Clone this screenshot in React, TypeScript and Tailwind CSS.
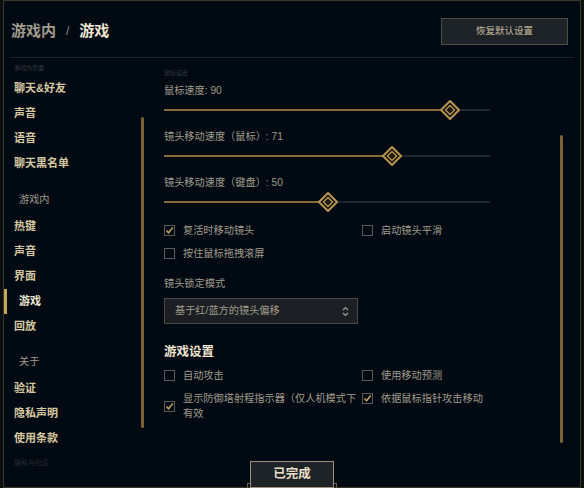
const navTop = ["聊天&好友", "声音", "语音", "聊天黑名单"];
const navGame = ["热键", "声音", "界面", "游戏", "回放"];
const navAbout = ["验证", "隐私声明", "使用条款"];

const sliders = [
  { label: "鼠标速度: 90", value: 90, mt: "mt-[6px]" },
  { label: "镜头移动速度（鼠标）: 71", value: 71, mt: "mt-[11px]" },
  { label: "镜头移动速度（键盘）: 50", value: 50, mt: "mt-[11px]" },
];

const NavItem = ({ text, active }: { text: string; active?: boolean }) =>
  active ? (
    <div className="h-[25px] flex items-center border-l-[3px] border-[#c8a55a] pl-[12px] text-[11px] font-bold text-[#f0e6d2]">
      {text}
    </div>
  ) : (
    <div className="h-[25px] flex items-center pl-[10px] text-[11px] font-bold text-[#d6c8a0]">
      {text}
    </div>
  );

const SectionLabel = ({ text, mt }: { text: string; mt: string }) => (
  <div className={`h-[28px] flex items-center pl-[15px] text-[10.2px] text-[#a09b8c] ${mt}`}>
    {text}
  </div>
);

const Thumb = () => (
  <svg width="20" height="20" viewBox="0 0 20 20">
    <polygon points="10,1 19,10 10,19 1,10" fill="#0a0e12" stroke="#b8954f" strokeWidth="2" />
    <polygon points="10,5.5 14.5,10 10,14.5 5.5,10" fill="none" stroke="#b8954f" strokeWidth="1.5" />
    <polygon points="10,8.5 11.5,10 10,11.5 8.5,10" fill="#3a2f1a" />
  </svg>
);

const Slider = ({ value }: { value: number }) => (
  <div className="relative h-[18px] mt-[3px] flex items-center">
    <div className="h-[2px] w-full bg-[#1e262e] flex">
      <div className="h-full bg-[#8a6c3c]" style={{ width: `calc(13px + ${value * 3.04}px)` }} />
    </div>
    <div className="absolute top-[-1px]" style={{ left: `${2 + value * 3.04}px` }}>
      <Thumb />
    </div>
  </div>
);

const Check = ({ checked }: { checked?: boolean }) => (
  <div className="w-[11px] h-[11px] shrink-0 border border-[#5b5a56] flex items-center justify-center">
    {checked && (
      <svg width="9" height="9" viewBox="0 0 9 9">
        <polyline points="1.5,4.5 3.5,6.8 7.8,1.5" fill="none" stroke="#c8a55a" strokeWidth="1.4" />
      </svg>
    )}
  </div>
);

const CheckRow = ({ text, checked, className = "" }: { text: string; checked?: boolean; className?: string }) => (
  <div className={`flex items-center gap-[8px] ${className}`}>
    <Check checked={checked} />
    <span className="text-[10.2px] leading-[15px] text-[#a09b8c]">{text}</span>
  </div>
);

export default function App() {
  return (
    <div className="w-[584px] h-[488px] bg-[#0b0f12] px-[3px] font-['Liberation_Sans','Noto_Sans_CJK_SC',sans-serif]">
      <div className="relative h-full border border-[#3a3526] bg-[#010a13] flex flex-col">
        {/* header */}
        <div className="h-[56px] shrink-0 pt-[4px] flex items-center justify-between pl-[7px] pr-[12px]">
          <div className="flex items-center text-[15px] font-bold">
            <span className="text-[#a09b8c]">游戏内</span>
            <span className="text-[#8c887c] font-normal text-[12px] mx-[10px]">/</span>
            <span className="text-[#f0e6d2]">游戏</span>
          </div>
          <button className="w-[127px] h-[27px] bg-[#1e2328] border border-[#4f4d46] text-[9.5px] text-[#c6bb9f]">
            恢复默认设置
          </button>
        </div>
        <div className="mx-[6px] h-px bg-[#1c242b]" />

        {/* body */}
        <div className="flex-1 min-h-0 flex">
          <div className="w-[137px] shrink-0 overflow-hidden pt-[2px]">
            <div className="h-[16px] flex items-center pl-[10px] text-[6px] text-[#33383c]">游戏内界面</div>
            {navTop.map((t, i) => (
              <NavItem key={i} text={t} />
            ))}
            <SectionLabel text="游戏内" mt="mt-[10px]" />
            {navGame.map((t, i) => (
              <NavItem key={i} text={t} active={t === "游戏"} />
            ))}
            <SectionLabel text="关于" mt="mt-[9px]" />
            {navAbout.map((t, i) => (
              <NavItem key={i} text={t} />
            ))}
            <div className="h-[25px] flex items-center pl-[10px] text-[7px] text-[#262b30]">隐私与社区</div>
          </div>
          <div className="w-[3px] h-[311px] mt-[59px] bg-[#7a6234] rounded-full shrink-0" />

          <div className="w-[326px] ml-[20px] shrink-0 flex flex-col">
            <div className="mt-[10px] h-[10px] leading-[10px] text-[6px] text-[#33383c]">鼠标设置</div>
            {sliders.map((s, i) => (
              <div key={i}>
                <div className={`${s.mt} h-[14px] leading-[14px] text-[10.2px] text-[#a09b8c]`}>{s.label}</div>
                <Slider value={s.value} />
              </div>
            ))}

            <div className="grid grid-cols-[198px_1fr] mt-[12px]">
              <CheckRow text="复活时移动镜头" checked />
              <CheckRow text="启动镜头平滑" />
            </div>
            <CheckRow text="按住鼠标拖拽滚屏" className="mt-[8px]" />

            <div className="mt-[16px] h-[14px] leading-[14px] text-[10.2px] text-[#a09b8c]">镜头锁定模式</div>
            <div className="mt-[7px] w-[194px] h-[26px] bg-[#1b1f23] border border-[#4a4942] flex items-center justify-between pl-[10px] pr-[8px]">
              <span className="text-[10.2px] text-[#a09b8c]">基于红/蓝方的镜头偏移</span>
              <svg width="7" height="11" viewBox="0 0 7 11">
                <polyline points="1,4 3.5,1.5 6,4" fill="none" stroke="#a09b8c" strokeWidth="1.2" />
                <polyline points="1,7 3.5,9.5 6,7" fill="none" stroke="#a09b8c" strokeWidth="1.2" />
              </svg>
            </div>

            <div className="mt-[19px] h-[18px] leading-[18px] text-[12.5px] font-bold text-[#f0e6d2]">游戏设置</div>
            <div className="grid grid-cols-[198px_1fr] mt-[7px]">
              <CheckRow text="自动攻击" />
              <CheckRow text="使用移动预测" />
            </div>
            <div className="grid grid-cols-[198px_1fr] items-start mt-[8px]">
              <CheckRow text="显示防御塔射程指示器（仅人机模式下有效" checked />
              <CheckRow text="依据鼠标指针攻击移动" checked />
            </div>
          </div>

          <div className="w-[3px] h-[308px] mt-[77px] ml-[70px] bg-[#7a6234] rounded-full shrink-0" />
        </div>

        {/* footer button over the frame edge */}
        <div className="absolute bottom-[-1px] left-0 right-0 flex justify-center items-end">
          <div className="w-[3px] h-[5px] border-l border-t border-[#6b604a]" />
          <button className="w-[84px] h-[27px] bg-[#1e2328] border border-[#9c9277] text-[12.5px] font-bold text-[#e8dfc6]">
            已完成
          </button>
          <div className="w-[3px] h-[5px] border-r border-t border-[#6b604a]" />
        </div>
      </div>
    </div>
  );
}
